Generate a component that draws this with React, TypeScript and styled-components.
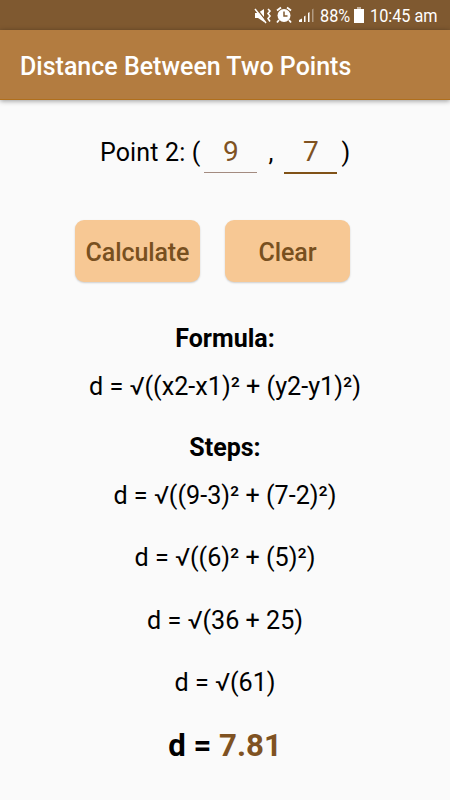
import React from 'react';
import styled, { createGlobalStyle } from 'styled-components';

const Global = createGlobalStyle`
  * { box-sizing: border-box; }
  body { margin: 0; background: #fafafa; font-family: Roboto, "Noto Sans", sans-serif; color: #000; }
`;
const Screen = styled.div`
  width: 450px; height: 800px; overflow: hidden; display: flex; flex-direction: column; background: #fafafa;
`;
const StatusBar = styled.header`
  height: 30px; flex: none; background: #7f5930; color: #fff; display: flex; align-items: center;
  justify-content: flex-end; padding: 2px 14px 0 0;
`;
const StatusText = styled.span<{ $width: number }>`
  width: ${p => p.$width}px; font-size: 19px; line-height: 26px; white-space: nowrap;
  transform: scaleX(.855); transform-origin: 0 50%;
`;
const Icon = styled.svg`
  flex: none; display: block;
`;
const AppBar = styled.div`
  height: 70px; flex: none; background: #b37c40; color: #fff; display: flex; align-items: center;
  padding: 3px 20px 0; border-bottom: 1px solid #b06f1c; box-shadow: 0 1px 5px rgba(0,0,0,.4);
`;
const Title = styled.h1`
  margin: 0; font-size: 25px; font-weight: 500; white-space: nowrap;
`;
const PointRow = styled.div`
  display: flex; justify-content: center; height: 40px; margin-top: 33px; font-size: 25px; line-height: 39px;
`;
const PointLabel = styled.span`
  letter-spacing: .15px;
`;
const Field = styled.span<{ $active?: boolean }>`
  width: 53px; height: ${p => (p.$active ? 41 : 40)}px; margin: 0 4px; text-align: center; line-height: 37px;
  color: #7f5222; font-size: 28px;
  border-bottom: ${p => (p.$active ? '2px solid #805217' : '1px solid #a38b80')};
`;
const Comma = styled.span`
  width: 19px; text-align: center;
`;
const Buttons = styled.div`
  display: flex; justify-content: center; gap: 25px; margin: 47px 25px 0 0;
`;
const Button = styled.button`
  width: 125px; height: 62px; border: 0; border-radius: 9px; padding: 3px 0 0; background: #f7c894; color: #78501f;
  font: 500 25px Roboto, sans-serif; letter-spacing: -.1px; box-shadow: 0 1px 2px rgba(0,0,0,.18);
`;
const Line = styled.div<{ $top: number; $kind?: 'head' | 'result' }>`
  height: 40px; line-height: 40px; margin-top: ${p => p.$top}px; text-align: center; white-space: nowrap;
  font-size: ${p => (p.$kind === 'result' ? 31.2 : p.$kind ? 25 : 25.15)}px; font-weight: ${p => (p.$kind ? 700 : 400)};
`;
const Answer = styled.span`color: #7f5222;`;

const StatusIcons = () => (
  <Icon width="66" height="20" viewBox="0 0 66 20" fill="#fff">
    <path d="M1 7h3l6-4v13l-6-4H1z" />
    <path d="M2 2l11 14" stroke="#7f5930" strokeWidth="1.3" />
    <path d="M1 3l11 14" stroke="#fff" strokeWidth="1.5" />
    <path d="M14 3l2 2-2 2.500 2 2.500-2 2.500 2 3" fill="none" stroke="#fff" strokeWidth="1.6" />
    <circle cx="30" cy="9.500" r="6.500" />
    <path d="M23 4.500l4-3M37 4.500l-4-3M25 14l-2 2.500M35 14l2 2.500" stroke="#fff" strokeWidth="1.8" />
    <path d="M30 5.500v4.500h3.500" fill="none" stroke="#7f5930" strokeWidth="1.5" />
    <path d="M45 14l3-1.500V16h-3zM50 10.500l1.500-1V16H50zM54 7l1.500-1v10H54z" />
    <path d="M58 3.500l1.500-1V16H58z" opacity=".4" />
  </Icon>
);

export default function App() {
  return (
    <Screen>
      <Global />
      <StatusBar>
        <StatusIcons />
        <StatusText $width={33}>88%</StatusText>
        <Icon width="17" height="18" viewBox="0 0 17 18" fill="#fff">
          <path d="M4 0h4v2H4z" opacity=".55" />
          <path d="M1 2h10v14H1z" />
        </Icon>
        <StatusText $width={66}>10:45 am</StatusText>
      </StatusBar>
      <AppBar><Title>Distance Between Two Points</Title></AppBar>
      <PointRow>
        <PointLabel>Point 2: (</PointLabel><Field>9</Field><Comma>,</Comma><Field $active>7</Field><span>)</span>
      </PointRow>
      <Buttons><Button>Calculate</Button><Button>Clear</Button></Buttons>
      <Line $top={37} $kind="head">Formula:</Line>
      <Line $top={8}>d = √((x2-x1)² + (y2-y1)²)</Line>
      <Line $top={21} $kind="head">Steps:</Line>
      <Line $top={8}>d = √((9-3)² + (7-2)²)</Line>
      <Line $top={22}>d = √((6)² + (5)²)</Line>
      <Line $top={23}>d = √(36 + 25)</Line>
      <Line $top={22}>d = √(61)</Line>
      <Line $top={23} $kind="result">d = <Answer>7.81</Answer></Line>
    </Screen>
  );
}
